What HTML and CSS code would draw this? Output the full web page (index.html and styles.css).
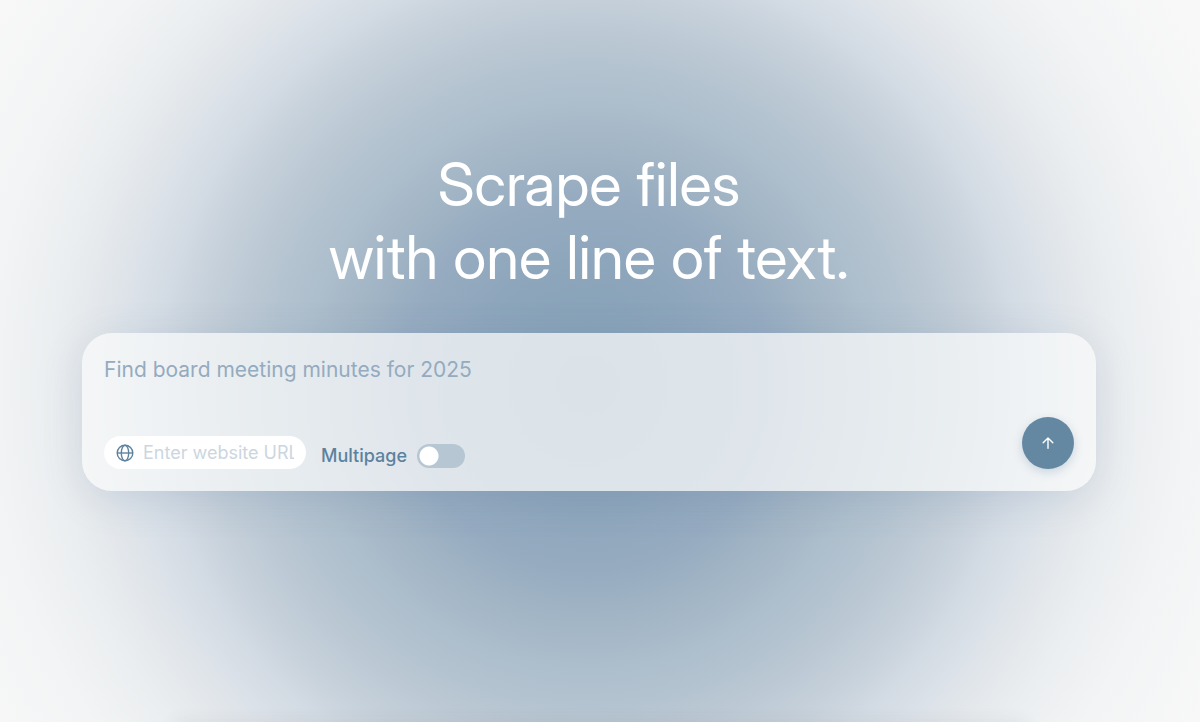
FILE: index.html
```html
<!DOCTYPE html>
<html lang="en">
<head>
<meta charset="utf-8">
<meta name="viewport" content="width=device-width, initial-scale=1">
<title>Scrape files</title>
<link rel="stylesheet" href="styles.css">
</head>
<body>
<main class="hero">
  <h1 class="title">Scrape files<br>with one line of text.</h1>
  <form class="card">
    <textarea class="prompt" rows="2" aria-label="What to find" placeholder="Find board meeting minutes for 2025"></textarea>
    <div class="controls">
      <label class="url">
        <svg class="globe" viewBox="0 0 18 18" fill="none" stroke="currentColor" stroke-width="1.4" aria-hidden="true"><circle cx="9" cy="9" r="7.8"/><ellipse cx="9" cy="9" rx="3.7" ry="7.8"/><path d="M1.2 9h15.6"/></svg>
        <input class="url-input" type="text" aria-label="Website URL" placeholder="Enter website URL">
      </label>
      <label class="multi">Multipage <input class="switch" type="checkbox" role="switch"></label>
      <button class="send" type="submit" aria-label="Submit">
        <svg class="arrow" viewBox="0 0 14 14" fill="none" stroke="currentColor" stroke-width="1.4" stroke-linecap="round" stroke-linejoin="round" aria-hidden="true"><path d="M7 12.2V2M2.2 6.8L7 2l4.8 4.8"/></svg>
      </button>
    </div>
  </form>
</main>
<div class="next-edge"></div>
</body>
</html>
```
FILE: styles.css
```css
* { box-sizing: border-box; }
body {
  margin: 0;
  min-height: 100vh;
  display: flex;
  flex-direction: column;
  overflow: hidden;
  font-family: Inter, "Liberation Sans", sans-serif;
  background: radial-gradient(circle at 49% 385px, #839fb6 0, #8ca5bb 110px, #96abc0 185px, #a3b6c6 240px, #adbecc 285px, #b4c3d0 320px, #c4cfd9 385px, #d2dae3 428px, #dae1e8 460px, #e3e7eb 495px, #ebeef0 535px, #f2f4f5 600px, #f8f8f8 700px);
}
.hero {
  flex: 1;
  padding: 148px 104px 32px 82px;
}
.title {
  margin: 0 0 39px;
  color: #fff;
  font-family: "Inter Display", Inter, sans-serif;
  font-size: 60px;
  font-weight: 400;
  line-height: 73px;
  text-align: center;
}
.card {
  padding: 22px;
  border-radius: 30px;
  background: rgba(248, 249, 250, 0.75);
  box-shadow: 0 8px 40px rgba(80, 112, 150, 0.16);
}
.prompt {
  display: block;
  width: 100%;
  height: 62px;
  padding: 0;
  border: 0;
  outline: 0;
  resize: none;
  background: transparent;
  color: #5d829e;
  font: 400 21px/29px Inter, "Liberation Sans", sans-serif;
}
.prompt::placeholder { color: #94abbf; opacity: 1; }
.controls {
  display: flex;
  align-items: flex-end;
}
.url {
  display: flex;
  align-items: center;
  gap: 9px;
  width: 202px;
  height: 33px;
  padding: 0 12px;
  border-radius: 17px;
  background: #fff;
  color: #5d829e;
}
.globe { width: 18px; height: 18px; flex: none; }
.url-input {
  flex: 1;
  min-width: 0;
  padding: 0;
  border: 0;
  outline: 0;
  background: transparent;
  color: inherit;
  font: 400 18px/24px Inter, "Liberation Sans", sans-serif;
}
.url-input::placeholder { color: #ccd6e0; opacity: 1; }
.multi {
  display: flex;
  align-items: center;
  gap: 10px;
  margin-left: 15px;
  color: #5d829e;
  font-size: 18px;
  font-weight: 500;
  line-height: 26px;
}
.switch {
  appearance: none;
  width: 48px;
  height: 24px;
  margin: 0;
  border-radius: 12px;
  background: radial-gradient(circle at 12px 12px, #fff 9px, transparent 10px) #b7c6d3;
}
.send {
  display: grid;
  place-items: center;
  width: 52px;
  height: 52px;
  margin-left: auto;
  padding: 0;
  border: 0;
  border-radius: 50%;
  background: #6488a2;
  color: #fff;
  box-shadow: 0 3px 10px rgba(80, 120, 160, 0.25);
}
.arrow { width: 14px; height: 14px; }
.next-edge {
  height: 0;
  margin: 0 180px;
  box-shadow: 0 8px 18px 6px rgba(70, 70, 80, 0.12);
}
```
